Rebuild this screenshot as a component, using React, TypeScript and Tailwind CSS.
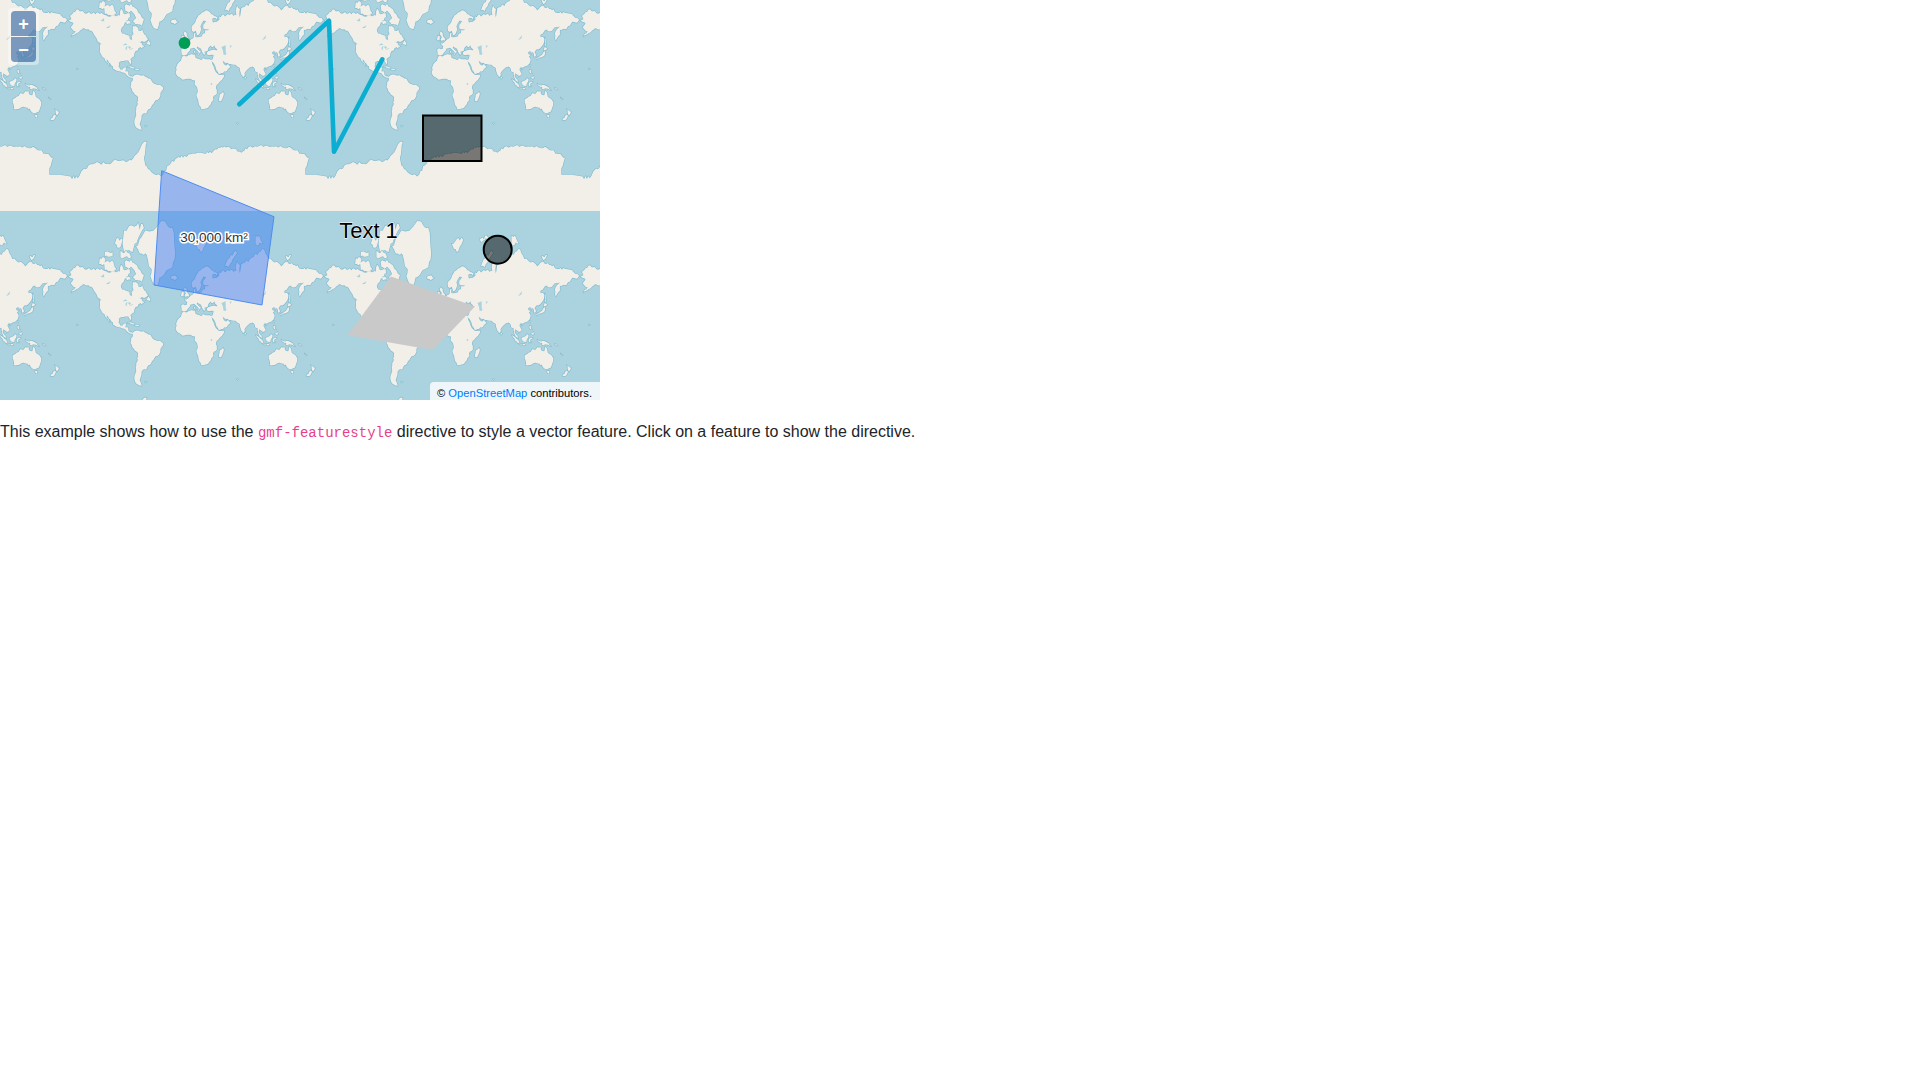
import React from "react";

const LAND: string[] = [
  // North America
  "-168,65.6 -164,66.5 -166,68.3 -163,69 -157,71.2 -150,70.5 -141,69.7 -135,69.3 -128,70 -122,69.8 -115,68.5 -108,68 -100,68 -96,68.3 -94,71.8 -90,69 -85,69.5 -82,69.5 -81.5,67.5 -87,65 -93,61.5 -94.5,59 -92.5,57 -87,56 -82.3,55.2 -82,52.9 -79.5,51.3 -78.8,52.5 -79.5,54.7 -76.6,56.5 -78,58.8 -77.5,62.5 -73.5,62.3 -70,61 -69.5,59 -66,58.8 -64.5,60.3 -61,56 -56,52.5 -60,50.2 -66,50.2 -69,48.4 -65,49 -64.5,47 -61,45.8 -65.5,43.6 -66.5,45 -70,43.7 -70.5,41.7 -74,40.6 -75.5,38 -76,35 -78,33.9 -81,31.8 -80,27 -80.5,25.2 -82.5,27.7 -84,30 -89,30.2 -90,29.1 -94,29.6 -97.3,27.5 -97.7,22.5 -95.5,18.8 -92,18.5 -90.5,21 -87,21.5 -88,16 -84,15.8 -83.4,11 -81,9 -79.5,9.5 -77.4,8.7 -77.8,7.5 -80.5,7.3 -85.5,10 -87.5,13 -92,14.5 -95,16 -101,17.3 -105.5,20 -105.5,22.5 -109,26 -112.5,30 -114.7,31.7 -112,27.5 -109.8,23 -112,25 -115,29 -117.2,32.6 -120.5,34.5 -122.5,37.7 -124.3,40.4 -124,46.5 -122.5,48.5 -127.5,51 -130.5,54.5 -134,58 -140,60 -147,61 -152,59 -158,56.5 -164,54.7 -158,58.8 -162,59.5 -165,61.5 -161,64",
  // South America
  "-77.4,8.7 -75.5,10.8 -72,12 -68,11 -62,10.7 -60,8.5 -52,5 -50,1 -44,-2.5 -38,-3.5 -35,-6 -35,-9 -39,-14 -39,-18 -41,-22 -46,-24 -48.5,-28 -52,-32.5 -57,-36 -58,-38.5 -62,-39 -65,-41 -65.5,-45 -68,-50 -65,-54.8 -70,-54 -74,-52 -75.5,-47 -73,-42 -73.5,-37 -71.5,-30 -70,-20 -76,-14 -81,-6 -80,-2.5 -80,1 -77.5,4 -77.8,7.5",
  // Greenland and Arctic
  "-73,78.2 -60,82 -32,83.6 -20,81.5 -18,76 -22,70.5 -32,68 -40,65 -43,60 -48,61 -53,66 -51,69.5 -55,71 -58,75.5 -68,76",
  "-80,73.7 -72,71.5 -67,69 -62,66.5 -65,62.5 -72,63.5 -78,65 -73,67 -78,70 -88,70.5 -89,73",
  "-117,69 -105,68.7 -101,69.7 -105,73 -118,72.5",
  "-90,76.5 -78,76.5 -75,79 -62,82.5 -72,83 -90,82 -92,79",
  "-125,72 -118,72 -116,74 -124,74.5",
  "-95,74.6 -80,74.7 -82,76 -95,77",
  "-117,75 -106,75 -106,76.5 -117,76.5",
  "-103,79 -95,78 -92,80 -100,80.5",
  "-87,64 -81,63.5 -81,65 -86,66",
  "-59,47.8 -53,46.8 -53,49 -56,51.5",
  "-128,50.7 -123.5,48.4 -125,50",
  "-85,22 -80,23 -74.2,20.2 -78,19.9 -82,22.3",
  "-74.4,18.5 -74,20 -69,19.7 -68.5,18.3 -71,18",
  "-24,65.5 -18,66.4 -14,65 -19,63.4 -23,64",
  "11,79 20,80.5 27,80 20,76.8 14,77.5",
  "52,71 56,74 67,77 69,76 59,72 57,70.5",
  "95,79 105,79 100,81 95,81",
  "50,80.2 60,81 63,80.3 55,79.8",
  "137,75 145,75.5 140,73.5",
  "-5.5,50.2 1.3,51.2 1.5,52.8 -1.5,55 -2,57.6 -5,58.6 -6,56.5 -3,54 -5,52 -3.5,51.4",
  "-10,52 -6,52 -6,55 -8.5,55.2",
  // Eurasia
  "-9,38.7 -9.3,43 -1.7,43.4 -1,46 -4.7,48.4 -1.5,48.7 1.5,50.3 4,52 8,53.7 8.3,57 10.6,57.7 10,55 11,54 14,54 19,54.5 21,57 24,57.2 24,59.3 30,60 23,60 21.3,61 21.5,63 25.4,65.2 22,65.6 17.5,62 18.8,60 16.5,57 14.3,55.6 12.6,56 11,59 8,58 5.5,59 5,62 10,64.5 15,68.5 20,70 26,71 31,70 41,67.5 41,66.2 34,66.7 35,64.3 40,64.7 44,66 44,68 54,68.5 60,69 68,68.5 67,71 69,73 73,71.5 72.6,67.5 73.6,68.5 75,72 80,72.5 87,74 100,76.5 105,77.6 113,74 127,72.5 131,71 140,72.8 150,71.5 160,69.7 170,69.8 180.6,69 180.6,65 177,62.5 170,60 163,59.8 163,56 157,51 155.7,57 163,62.3 156,61.5 152,59 142,59.3 135,54.7 141,53 140,48 135,43.5 130,42.5 127.5,39.8 129.3,37 129,35.2 126.5,34.5 126.5,37.5 125,39.7 121.5,39 122,40.7 118,39 119.5,37.3 122.5,37 119.3,35 122,31 121,28 117,23.5 110.5,21 108,21.5 106,19 109,13 109,11.5 105,8.7 105,10.5 100.5,13.5 99.5,10 103.5,4.5 104,1.4 101,3 98.5,8 98,15 94.5,16 94,19 91,22.5 87,21.5 85,19.5 80.3,15 80,11 77.5,8 75,12 73,19 72.5,21 69,22.5 67,25 62,25.2 57,25.7 56.5,27 51,28 48.7,30 50,26.5 51.5,25 54,24 56.3,26 59.7,22.5 55,17 45,12.9 43.3,12.7 39,21 35,28 32.7,29.5 32.5,31.2 34,31 35.5,34 36,36.5 31,36.5 27.5,36.7 26.3,39.5 29,41 35,42 41.5,41.5 38,44.5 37,46.7 33.5,44.5 32,46.5 28.5,44 28,41.5 26,40.8 23,40.3 24,38 22.8,36.5 21,38.5 19.5,40.5 19,42.3 13.5,45.5 12.3,44.5 16,41.5 18.5,40 16.5,39 16,38 14,40.5 10.5,43 8.7,44.3 3,43.2 3,41.8 0,39.5 -2,36.8 -5.5,36 -9,37",
  "-180.6,69 -175,67 -170,66 -173,64.3 -180.6,65",
  // Africa
  "-5.8,35.8 -2,35 3,36.8 10,37.3 10.2,34 15,32.3 20,31 20,32.8 25,31.6 32.5,31.2 32.6,29.8 35.5,24 37.3,19 39.5,15 43.2,11.5 51.2,11.9 48,4.5 42,-1.5 39.5,-5 40.7,-14.5 35,-20 35.5,-24 32.8,-26 32.5,-28.5 28,-33 22,-34.2 18.5,-34.2 15,-27 11.8,-17 13.7,-11 12,-5 9,-1 9.7,3.5 5.5,4.5 1,6 -4,5.2 -7.5,4.4 -13,8.5 -16.8,12.5 -17.4,14.7 -16,19 -17,21 -13,27.7 -9.7,30 -9,33 -6,35.8",
  "49.3,-12 50.4,-16 47,-25 44,-25 43.3,-22 44.3,-16.5",
  "79.8,9.5 81.8,7.5 80.5,6 79.8,7.5",
  "95.3,5.6 98,4 104,-1 106,-5.8 104,-5.6 100,-2 97,2.5",
  "105.3,-6.6 108.5,-6.5 114.5,-7.7 114.5,-8.7 106.5,-7.5",
  "109,1.5 113,3 117,7 119,5 117.7,1 116,-4 111,-3 109,-0.5",
  "119.5,-5.5 119,-2 120,0.7 125,1.5 121,-1 123,-5 121,-3",
  "131,-1 135,-3 141,-2.7 147,-6 150.5,-10.5 144,-7.7 138,-8.3 138,-5.5 133,-4",
  "120.5,18.4 122.3,18.4 122,15 124,13 120.7,13.8 120,16",
  "122,7 125.5,9.8 126.5,7 125,5.8",
  "121,25.2 122,25 120.8,22 120.1,23",
  "108.7,19.3 110.5,20 110.3,18.5",
  "130.9,34 136,35.7 140,39.8 141.4,41.3 142,39.5 140.8,35.5 136,33.7 132.5,33.5",
  "130,33.5 132,33 131,31 130,32",
  "140,41.8 141.7,45.4 145.3,43.5 143,42",
  "142,54 143,52 143.5,46.5 142,46 142,50",
  "12.5,38 15.6,38.2 15,36.7",
  "8.3,41 9.7,41 9.5,39 8.5,39",
  "-61,-51.5 -58,-51.3 -59,-52.3",
  "164,-20 167,-22.3 166,-22.2",
  "156,-7 160,-9 159,-9.5",
  "-156,20 -155,19.6 -155.7,19",
  "68.8,-49 70.5,-49 69.5,-49.8",
  // Oceania
  "114,-22 113.5,-26 115.5,-32 115,-34.3 118,-35 124,-33 129,-31.6 134,-32.5 136,-35 138,-33.5 138,-35.6 140.5,-38 146,-39 150,-37.5 153,-31 153.5,-25.5 149,-21 146,-19 145,-14.5 142.5,-10.8 141,-17 136,-15 136.5,-12 131,-11.5 129,-15 125,-14 122,-18 117,-20.5",
  "144.7,-41 148.3,-41 147.5,-43.5 146,-43.5",
  "172.7,-34.5 178.5,-37.7 175.5,-41.5 174,-39",
  "172.7,-40.5 174.3,-41.7 170.7,-46 166.5,-46",
  // Antarctica
  "-180.6,-78 -165,-78.5 -155,-79 -150,-77 -140,-75 -125,-74 -110,-74.5 -100,-73 -90,-73 -80,-73 -75,-71 -68,-68 -63,-64 -58,-63.5 -60,-68 -62,-72 -60,-75 -50,-77.5 -35,-78 -27,-75 -15,-72 -5,-71 10,-70 25,-70 35,-69 45,-67 55,-66.5 65,-67.5 70,-69 75,-69.5 85,-66.5 100,-66 115,-66.5 130,-66 145,-67 160,-70 170,-72 165,-76 165,-78 180.6,-78 180.6,-85.06 -180.6,-85.06",
];

const LAKES: string[] = [
  "-92,46.7 -85,47 -88,48.7",
  "-87.8,42 -86.5,42 -85,46 -87.5,45",
  "-84,46 -80,45 -82,43 -83.5,44",
  "-83,41.7 -79,42.8 -76,43.5 -79.5,43.6",
  "47,45 53,46.8 53,41 54,37 50,37 49.3,41",
  "58.5,46.5 61.5,46.5 60,44",
  "104,51.7 110,55.7 108.5,52.6",
  "32,-0.5 34,0 34,-2.5 32,-2.5",
  "-123,65.5 -118,67 -118,65",
  "-116,61 -109,62.8 -111,61",
];

function project(lon: number, lat: number): [number, number] {
  const x = ((lon + 180) / 360) * 256;
  const y = 128 - (128 / Math.PI) * Math.log(Math.tan(Math.PI / 4 + (lat * Math.PI) / 360));
  return [x, y];
}

// Adds small, repeatable wiggles so that long straight coast segments read as a coastline.
function roughen(points: number[][]): number[][] {
  const out: number[][] = [];
  points.forEach((a, i) => {
    const b = points[(i + 1) % points.length];
    out.push(a);
    const dx = b[0] - a[0];
    const dy = b[1] - a[1];
    const len = Math.hypot(dx, dy);
    const isEdge = Math.abs(a[0]) > 180 || Math.abs(b[0]) > 180 || a[1] < -85 || b[1] < -85;
    if (len < 2.5 || isEdge) return;
    const steps = Math.min(5, Math.floor(len / 2));
    for (let s = 1; s < steps; s++) {
      const t = s / steps;
      const h = Math.sin(a[0] * 12.9898 + a[1] * 78.233 + s * 37.719) * 43758.5453;
      const n = (h - Math.floor(h) - 0.5) * 1.4;
      out.push([a[0] + dx * t - (dy / len) * n, a[1] + dy * t + (dx / len) * n]);
    }
  });
  return out;
}

function toPath(list: string[], rough: boolean): string {
  return list
    .map((poly) => {
      const pts = poly.split(" ").map((p) => p.split(",").map(Number));
      const use = rough ? roughen(pts) : pts;
      return (
        "M" +
        use
          .map(([lon, lat]) => {
            const [x, y] = project(lon, lat);
            return `${x.toFixed(2)} ${y.toFixed(2)}`;
          })
          .join("L") +
        "Z"
      );
    })
    .join("");
}

const landPath = toPath(LAND, true);
const lakePath = toPath(LAKES, false);
const OFFSETS: [number, number][] = [
  [-196, -45],
  [60, -45],
  [316, -45],
  [572, -45],
  [-196, 211],
  [60, 211],
  [316, 211],
  [572, 211],
];

export default function App() {
  return (
    <div className="font-['Liberation_Sans',Arial,sans-serif] text-[#212529] text-base leading-6 bg-white min-h-screen">
      <div className="relative w-[600px] h-[400px] overflow-hidden bg-[#aad3df]">
        <svg width="600" height="400" viewBox="0 0 600 400" className="block">
          <defs>
            <path id="coast" d={landPath} />
            <path id="lakes" d={lakePath} />
          </defs>
          <g fill="none" stroke="#85bcd0" strokeWidth="1.3" strokeLinejoin="round">
            {OFFSETS.map(([x, y]) => (
              <use key={`s${x}_${y}`} href="#coast" x={x} y={y} />
            ))}
          </g>
          <rect x="0" y="211" width="600" height="3" fill="#aad3df" />
          <g fill="#f2efe9">
            {OFFSETS.map(([x, y]) => (
              <use key={`f${x}_${y}`} href="#coast" x={x} y={y} />
            ))}
          </g>
          <g fill="#aad3df">
            {OFFSETS.map(([x, y]) => (
              <use key={`l${x}_${y}`} href="#lakes" x={x} y={y} />
            ))}
          </g>
          <polyline
            points="239.3,104.3 329,20.7 334,151.7 382.3,59.3"
            fill="none"
            stroke="#0baed0"
            strokeWidth="4.6"
            strokeLinecap="round"
            strokeLinejoin="round"
          />
          <circle cx="184.5" cy="43" r="5.9" fill="#009d57" />
          <rect x="423" y="115.5" width="58.5" height="45.5" fill="rgba(0,0,0,0.5)" stroke="#000" strokeWidth="2" />
          <circle cx="497.7" cy="249.7" r="14" fill="rgba(0,0,0,0.5)" stroke="#000" strokeWidth="2" />
          <polygon points="391,276.5 475,306.5 433,350 347.5,335.3" fill="#c9c9c9" />
          <polygon
            points="161.7,170.7 274,216.7 262,305 154,285"
            fill="rgba(50,120,243,0.47)"
            stroke="#4f8cf0"
            strokeWidth="1"
          />
          <text
            x="214"
            y="242"
            textAnchor="middle"
            fontSize="13.5"
            fill="#333333"
            stroke="#ffffff"
            strokeWidth="3"
            paintOrder="stroke"
          >
            30,000 km²
          </text>
          <text
            x="368.5"
            y="238"
            textAnchor="middle"
            fontSize="22"
            fill="#000000"
            stroke="#ffffff"
            strokeWidth="1"
            paintOrder="stroke"
          >
            Text 1
          </text>
        </svg>

        <div className="absolute left-2 top-2 p-[2px] rounded bg-white/40">
          <button className="block m-[1px] w-[25px] h-[25px] rounded-t-sm bg-[#003c88]/50 text-white font-bold text-[18px] leading-[27px] text-center">
            +
          </button>
          <button className="block m-[1px] mt-0 w-[25px] h-[25px] rounded-b-sm bg-[#003c88]/50 text-white font-bold text-[18px] leading-[27px] text-center">
            −
          </button>
        </div>

        <div className="absolute right-0 bottom-0 h-[18px] w-[170px] rounded-tl bg-white/80 pl-[7px] text-[11.2px] leading-[22px] text-black whitespace-nowrap">
          © <span className="text-[#007bff]">OpenStreetMap</span> contributors.
        </div>
      </div>
      <p className="mt-5 whitespace-nowrap">
        This example shows how to use the{" "}
        <code className="font-['Liberation_Mono',monospace] text-[14px] text-[#e83e8c]">gmf-featurestyle</code>{" "}
        directive to style a vector feature. Click on a feature to show the directive.
      </p>
    </div>
  );
}
